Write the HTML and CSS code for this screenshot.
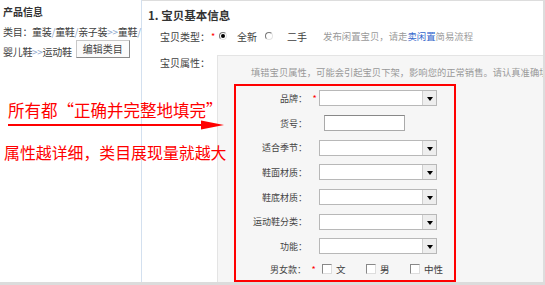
FILE: index.html
```html
<!DOCTYPE html>
<html lang="zh-CN">
<head>
  <meta charset="UTF-8">
  <title>宝贝基本信息</title>
  <link rel="stylesheet" href="styles.css">
</head>
<body>
  <div class="page">
    <!-- Left: product info -->
    <aside class="side">
      <h3>产品信息</h3>
      <div class="cat-line">类目：童装<span class="sep">/</span>童鞋<span class="sep">/</span>亲子装<span class="sep">&gt;&gt;</span>童鞋<span class="sep">/</span></div>
      <div class="cat-line cat-line2">
        <span>婴儿鞋<span class="sep">&gt;&gt;</span>运动鞋</span>
        <button class="btn">编辑类目</button>
      </div>
    </aside>

    <!-- Right: basic info -->
    <main class="main">
      <h2>1. 宝贝基本信息</h2>
      <div class="type-row">
        <span class="type-label">宝贝类型：</span>
        <span class="star">*</span>
        <span class="radio checked"></span>
        <span class="opt">全新</span>
        <span class="radio radio2"></span>
        <span class="opt opt2">二手</span>
        <span class="type-note">发布闲置宝贝，请走<a href="#">卖闲置</a>简易流程</span>
      </div>
      <div class="attr">
        <div class="attr-label">宝贝属性：</div>
        <div class="attr-panel">
          <p class="tip">填错宝贝属性，可能会引起宝贝下架，影响您的正常销售。请认真准确填写宝贝属性。</p>
          <div class="attr-box">
            <div class="field">
              <span class="f-label">品牌：</span><span class="f-star">*</span>
              <div class="select"><span class="arrow"></span></div>
            </div>
            <div class="field">
              <span class="f-label">货号：</span><span class="f-star"></span>
              <input class="text" type="text">
            </div>
            <div class="field">
              <span class="f-label">适合季节：</span><span class="f-star"></span>
              <div class="select"><span class="arrow"></span></div>
            </div>
            <div class="field">
              <span class="f-label">鞋面材质：</span><span class="f-star"></span>
              <div class="select"><span class="arrow"></span></div>
            </div>
            <div class="field">
              <span class="f-label">鞋底材质：</span><span class="f-star"></span>
              <div class="select"><span class="arrow"></span></div>
            </div>
            <div class="field">
              <span class="f-label">运动鞋分类：</span><span class="f-star"></span>
              <div class="select"><span class="arrow"></span></div>
            </div>
            <div class="field">
              <span class="f-label">功能：</span><span class="f-star"></span>
              <div class="select"><span class="arrow"></span></div>
            </div>
            <div class="field field-last">
              <span class="f-label">男女款：</span><span class="f-star">*</span>
              <div class="checks">
                <span class="check-item"><span class="checkbox"></span>文</span>
                <span class="check-item"><span class="checkbox"></span>男</span>
                <span class="check-item"><span class="checkbox"></span>中性</span>
              </div>
            </div>
          </div>
        </div>
      </div>
    </main>

    <!-- Red annotation over the page -->
    <div class="note-title">所有都“正确并完整地填完”</div>
    <svg class="note-arrow" width="216" height="10" viewBox="0 0 216 10">
      <line x1="0" y1="5" x2="200" y2="5" stroke="#f00" stroke-width="2"/>
      <polygon points="193,0.5 216,5 193,9.5" fill="#f00"/>
    </svg>
    <div class="note-sub">属性越详细，类目展现量就越大</div>
  </div>
</body>
</html>
```

FILE: styles.css
```css
body {
  margin: 0;
  width: 545px;
  font-family: "Noto Sans CJK SC", "Noto Sans", sans-serif;
  font-size: 10px;
  color: #404040;
  background-color: #ffffff;
}
.page {
  position: relative;
  display: flex;
  height: 282px;
  border-bottom: 3px solid #dcdcdc;
  overflow: hidden;
}

/* left column */
.side {
  width: 142px;
  flex-shrink: 0;
  box-sizing: border-box;
  border-right: 1px solid #d3e0ef;
  padding: 2px 0 0 3px;
}
.side h3 {
  margin: 0;
  font-size: 10px;
  line-height: 20px;
  font-weight: bold;
  color: #333;
}
.cat-line {
  line-height: 20px;
  white-space: nowrap;
  font-size: 10px;
  letter-spacing: -0.3px;
}
.cat-line2 {
  display: flex;
  align-items: center;
  gap: 4px;
  height: 20px;
}
.sep {
  color: #8ea7cc;
}
.btn {
  margin-top: -6px;
  width: 54px;
  height: 18px;
  padding: 0 0 3px;
  font-family: inherit;
  font-size: 10px;
  color: #444;
  background-color: #fbfbfb;
  border: 1px solid #c8c8c8;
  border-right-color: #8a8a8a;
  border-bottom-color: #8a8a8a;
  border-radius: 0;
}

/* right column */
.main {
  flex: 1;
  display: flex;
  flex-direction: column;
  min-width: 0;
  border-top: 1px solid #dddddd;
  border-right: 2px solid #dddddd;
}
.main h2 {
  margin: 0;
  padding: 4px 0 0 6px;
  font-size: 11.5px;
  line-height: 20px;
  font-weight: bold;
  color: #333;
}
.type-row {
  display: flex;
  align-items: center;
  height: 22px;
  padding: 0 0 8px 18px;
  white-space: nowrap;
}
.type-label {
  width: 50px;
}
.star {
  width: 6px;
  margin-left: 0;
  color: #f00;
  font-size: 9px;
  text-align: center;
}
.radio {
  width: 8px;
  height: 8px;
  margin-left: 3px;
  box-sizing: border-box;
  border-radius: 50%;
  border: 1px solid #777;
  border-right-color: #e4e4e4;
  border-bottom-color: #e4e4e4;
  background-color: #fff;
  display: flex;
  align-items: center;
  justify-content: center;
}
.radio.checked::after {
  content: "";
  width: 4px;
  height: 4px;
  border-radius: 50%;
  background-color: #000;
}
.radio2 {
  margin-left: 8px;
}
.opt {
  margin-left: 10px;
}
.opt2 {
  margin-left: 14px;
}
.type-note {
  margin-left: 16px;
  font-size: 9.4px;
  color: #9a9a9a;
}
.type-note a {
  color: #3366cc;
  text-decoration: none;
}

/* attributes */
.attr {
  flex: 1;
  display: flex;
  min-height: 0;
}
.attr-label {
  width: 75px;
  flex-shrink: 0;
  box-sizing: border-box;
  padding-left: 18px;
  line-height: 16px;
}
.attr-panel {
  flex: 1;
  min-width: 0;
  overflow: hidden;
  background-color: #f6f6f6;
  border-top: 1px solid #e4e4e4;
  border-left: 1px solid #e4e4e4;
}
.tip {
  margin: 0;
  padding: 9px 0 0 33px;
  line-height: 14px;
  font-size: 9.3px;
  color: #999;
  white-space: nowrap;
}
.attr-box {
  margin: 5px 0 0 16px;
  width: 222px;
  height: 198px;
  box-sizing: border-box;
  border: 2px solid #ff0000;
  display: flex;
  flex-direction: column;
}
.field {
  display: flex;
  align-items: center;
  height: 24.7px;
  flex-shrink: 0;
}
.field-last {
  flex: 1;
}
.f-label {
  width: 71px;
  text-align: right;
  font-size: 9px;
  white-space: nowrap;
  color: #444;
}
.f-star {
  width: 12px;
  padding-left: 3px;
  box-sizing: border-box;
  text-align: center;
  color: #f00;
  font-size: 9px;
}
.select {
  width: 118px;
  height: 16px;
  box-sizing: border-box;
  border: 1px solid #b8b8b8;
  background-color: #fff;
  display: flex;
  justify-content: flex-end;
}
.arrow {
  width: 13px;
  background-color: #eeeeee;
  border-left: 1px solid #cfcfcf;
  display: flex;
  align-items: center;
  justify-content: center;
}
.arrow::after {
  content: "";
  width: 0;
  height: 0;
  margin-top: 2px;
  border-left: 3px solid transparent;
  border-right: 3px solid transparent;
  border-top: 4px solid #000;
}
.text {
  margin: 0 0 0 5px;
  padding: 0;
  width: 81px;
  height: 16px;
  box-sizing: border-box;
  border: 1px solid #aaa;
  border-top-color: #888;
  background-color: #fff;
}
.checks {
  display: flex;
  margin-left: 4px;
}
.check-item {
  width: 44px;
  display: flex;
  align-items: center;
  gap: 4px;
  font-size: 9.5px;
}
.checkbox {
  width: 10px;
  height: 10px;
  box-sizing: border-box;
  border: 1px solid #888;
  border-right-color: #ddd;
  border-bottom-color: #ddd;
  background-color: #fff;
}

/* annotation */
.note-title,
.note-sub {
  position: absolute;
  color: #ff0000;
  white-space: nowrap;
  line-height: 20px;
}
.note-title {
  left: 8px;
  top: 100px;
  font-size: 16.5px;
}
.note-sub {
  left: 4px;
  top: 143px;
  font-size: 15.9px;
}
.note-arrow {
  position: absolute;
  left: 8px;
  top: 120px;
}
```
